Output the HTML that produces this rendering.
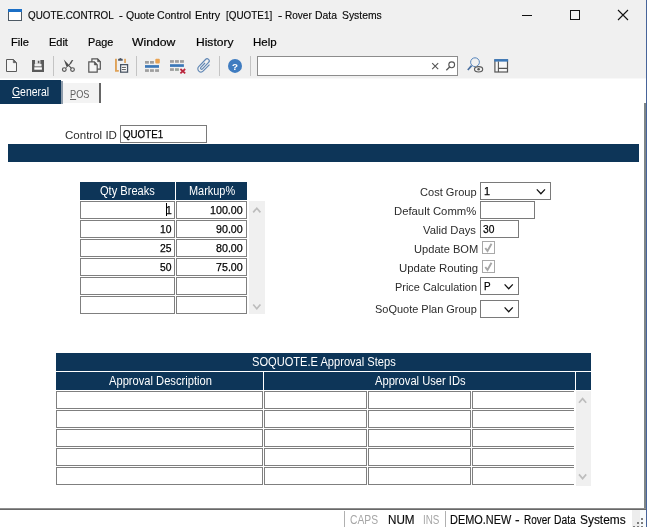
<!DOCTYPE html>
<html><head><meta charset="utf-8">
<style>
*{box-sizing:border-box;margin:0;padding:0}
html,body{width:647px;height:527px;overflow:hidden;background:#fff;font-family:"Liberation Sans",sans-serif;}
body{position:relative}
.abs{position:absolute}
.t{position:absolute;white-space:nowrap;line-height:1;transform-origin:0 0;display:block}
.cell{position:absolute;border:1px solid #7f7f7f;background:#fff;height:18px}
.hdr{position:absolute;background:#0d3558;height:18px}
.inp{position:absolute;border:1px solid #7a7a7a;background:#fff;height:18px}
.sep{position:absolute;top:56px;width:1px;height:20px;background:#c4c4c4}
svg{position:absolute;left:0;top:0;overflow:visible}
</style></head><body>
<div class="abs" style="left:0;top:0;width:647px;height:78px;background:#f0f0f0"></div>
<div class="abs" style="left:0;top:78px;width:647px;height:1px;background:#f8f8f8"></div>
<!-- search box -->
<div class="abs" style="left:257px;top:56px;width:201px;height:20px;background:#fff;border:1px solid #8c8c8c"></div>
<div class="sep" style="left:53px"></div><div class="sep" style="left:136px"></div><div class="sep" style="left:219px"></div><div class="sep" style="left:250px"></div>
<!-- tabs -->
<div class="abs" style="left:0;top:80px;width:61px;height:24px;background:#0d3558"></div>
<div class="abs" style="left:61px;top:81px;width:2px;height:23px;background:#8e9cab"></div>
<div class="abs" style="left:63px;top:83px;width:36px;height:19.5px;background:#f3f3f3"></div>
<div class="abs" style="left:99px;top:83px;width:2px;height:19.5px;background:#666"></div>
<!-- right edge -->
<div class="abs" style="left:644px;top:103px;width:2px;height:407px;background:#7e8688"></div>
<div class="abs" style="left:646px;top:0;width:1px;height:527px;background:#47649a"></div>
<!-- control id -->
<div class="inp" style="left:120px;top:125px;width:87px"></div>
<div class="abs" style="left:8px;top:144px;width:631px;height:18px;background:#0d3558"></div>
<!-- qty grid -->
<div class="hdr" style="left:80px;top:182px;width:95px"></div>
<div class="hdr" style="left:176px;top:182px;width:71px"></div>
<div class="abs" style="left:249px;top:201px;width:16px;height:113px;background:#f0f0f0"></div>
<!-- right form -->
<div class="inp" style="left:480px;top:182px;width:71px"></div>
<div class="inp" style="left:480px;top:201px;width:55px"></div>
<div class="inp" style="left:480px;top:220px;width:39px"></div>
<div class="inp" style="left:480px;top:277px;width:39px"></div>
<div class="inp" style="left:480px;top:300px;width:39px"></div>
<div class="abs" style="left:482px;top:241px;width:13px;height:13px;border:1px solid #a8a8a8;background:#fff"></div>
<div class="abs" style="left:482px;top:260px;width:13px;height:13px;border:1px solid #a8a8a8;background:#fff"></div>
<!-- approval grid -->
<div class="hdr" style="left:56px;top:353px;width:535px"></div>
<div class="hdr" style="left:56px;top:372px;width:207px"></div>
<div class="hdr" style="left:264px;top:372px;width:311px"></div>
<div class="hdr" style="left:576px;top:372px;width:15px"></div>
<div class="abs" style="left:576px;top:391px;width:15px;height:95px;background:#f0f0f0"></div>
<div class="cell" style="left:80px;top:201px;width:95px;"></div>
<div class="cell" style="left:176px;top:201px;width:71px;"></div>
<div class="cell" style="left:80px;top:220px;width:95px;"></div>
<div class="cell" style="left:176px;top:220px;width:71px;"></div>
<div class="cell" style="left:80px;top:239px;width:95px;"></div>
<div class="cell" style="left:176px;top:239px;width:71px;"></div>
<div class="cell" style="left:80px;top:258px;width:95px;"></div>
<div class="cell" style="left:176px;top:258px;width:71px;"></div>
<div class="cell" style="left:80px;top:277px;width:95px;"></div>
<div class="cell" style="left:176px;top:277px;width:71px;"></div>
<div class="cell" style="left:80px;top:296px;width:95px;"></div>
<div class="cell" style="left:176px;top:296px;width:71px;"></div>
<div class="cell" style="left:56px;top:391px;width:207px;"></div>
<div class="cell" style="left:264px;top:391px;width:103px;"></div>
<div class="cell" style="left:368px;top:391px;width:103px;"></div>
<div class="cell" style="left:472px;top:391px;width:102px;border-right:none;"></div>
<div class="cell" style="left:56px;top:410px;width:207px;"></div>
<div class="cell" style="left:264px;top:410px;width:103px;"></div>
<div class="cell" style="left:368px;top:410px;width:103px;"></div>
<div class="cell" style="left:472px;top:410px;width:102px;border-right:none;"></div>
<div class="cell" style="left:56px;top:429px;width:207px;"></div>
<div class="cell" style="left:264px;top:429px;width:103px;"></div>
<div class="cell" style="left:368px;top:429px;width:103px;"></div>
<div class="cell" style="left:472px;top:429px;width:102px;border-right:none;"></div>
<div class="cell" style="left:56px;top:448px;width:207px;"></div>
<div class="cell" style="left:264px;top:448px;width:103px;"></div>
<div class="cell" style="left:368px;top:448px;width:103px;"></div>
<div class="cell" style="left:472px;top:448px;width:102px;border-right:none;"></div>
<div class="cell" style="left:56px;top:467px;width:207px;"></div>
<div class="cell" style="left:264px;top:467px;width:103px;"></div>
<div class="cell" style="left:368px;top:467px;width:103px;"></div>
<div class="cell" style="left:472px;top:467px;width:102px;border-right:none;"></div>
<div class="abs" style="left:166px;top:203px;width:1.2px;height:13px;background:#000"></div>
<!-- status bar -->
<div class="abs" style="left:0;top:508px;width:646px;height:1px;background:#8e8e8e"></div><div class="abs" style="left:0;top:509px;width:646px;height:1px;background:#686868"></div>
<div class="abs" style="left:632px;top:510px;width:8px;height:17px;background:#ededed"></div><div class="abs" style="left:640px;top:510px;width:6px;height:17px;background:#f6fafc"></div>
<div class="abs" style="left:344px;top:511px;width:1px;height:16px;background:#b0b0b0"></div>
<div class="abs" style="left:445px;top:511px;width:1px;height:16px;background:#b0b0b0"></div>
<div class="abs" style="left:0;top:0;width:647px;height:527px;will-change:transform">
<span class="t" style="left:27.80px;top:9.72px;font-size:11.2px;color:#0a0a0a;transform:scaleX(0.8783);-webkit-text-stroke:0.15px #000;">QUOTE.CONTROL</span>
<span class="t" style="left:119.20px;top:9.72px;font-size:11.2px;color:#0a0a0a;transform:scaleX(1.0218);-webkit-text-stroke:0.15px #000;">-</span>
<span class="t" style="left:125.50px;top:9.72px;font-size:11.2px;color:#0a0a0a;transform:scaleX(0.9346);-webkit-text-stroke:0.15px #000;">Quote</span>
<span class="t" style="left:157.40px;top:9.72px;font-size:11.2px;color:#0a0a0a;transform:scaleX(0.9475);-webkit-text-stroke:0.15px #000;">Control</span>
<span class="t" style="left:195.30px;top:9.72px;font-size:11.2px;color:#0a0a0a;transform:scaleX(0.9632);-webkit-text-stroke:0.15px #000;">Entry</span>
<span class="t" style="left:226.10px;top:9.72px;font-size:11.2px;color:#0a0a0a;transform:scaleX(0.8837);-webkit-text-stroke:0.15px #000;">[QUOTE1]</span>
<span class="t" style="left:277.60px;top:9.72px;font-size:11.2px;color:#0a0a0a;transform:scaleX(1.1294);-webkit-text-stroke:0.15px #000;">-</span>
<span class="t" style="left:284.50px;top:9.72px;font-size:11.2px;color:#0a0a0a;transform:scaleX(0.8969);-webkit-text-stroke:0.15px #000;">Rover</span>
<span class="t" style="left:315.40px;top:9.72px;font-size:11.2px;color:#0a0a0a;transform:scaleX(0.9295);-webkit-text-stroke:0.15px #000;">Data</span>
<span class="t" style="left:341.60px;top:9.72px;font-size:11.2px;color:#0a0a0a;transform:scaleX(0.9264);-webkit-text-stroke:0.15px #000;">Systems</span>
<span class="t" style="left:11.40px;top:36.08px;font-size:11.6px;color:#000;transform:scaleX(0.9618);-webkit-text-stroke:0.2px #000;">File</span>
<span class="t" style="left:48.50px;top:36.08px;font-size:11.6px;color:#000;transform:scaleX(0.9458);-webkit-text-stroke:0.2px #000;">Edit</span>
<span class="t" style="left:87.50px;top:36.08px;font-size:11.6px;color:#000;transform:scaleX(0.9337);-webkit-text-stroke:0.2px #000;">Page</span>
<span class="t" style="left:132.40px;top:36.08px;font-size:11.6px;color:#000;transform:scaleX(1.0526);-webkit-text-stroke:0.2px #000;">Window</span>
<span class="t" style="left:195.70px;top:36.08px;font-size:11.6px;color:#000;transform:scaleX(1.0384);-webkit-text-stroke:0.2px #000;">History</span>
<span class="t" style="left:252.70px;top:36.08px;font-size:11.6px;color:#000;transform:scaleX(0.9925);-webkit-text-stroke:0.2px #000;">Help</span>
<span class="t" style="left:11.50px;top:86.24px;font-size:12px;color:#fff;transform:scaleX(0.8688);"><u>G</u>eneral</span>
<span class="t" style="left:69.80px;top:89.29px;font-size:11px;color:#606060;transform:scaleX(0.8345);"><u>P</u>OS</span>
<span class="t" style="left:64.60px;top:129.69px;font-size:11px;color:#2c2c2c;transform:scaleX(1.0485);">Control ID</span>
<span class="t" style="left:419.70px;top:186.69px;font-size:11px;color:#2c2c2c;transform:scaleX(1.0063);">Cost Group</span>
<span class="t" style="left:394.00px;top:205.69px;font-size:11px;color:#2c2c2c;transform:scaleX(1.0275);">Default Comm%</span>
<span class="t" style="left:423.40px;top:224.69px;font-size:11px;color:#2c2c2c;transform:scaleX(1.0217);">Valid Days</span>
<span class="t" style="left:413.50px;top:243.69px;font-size:11px;color:#2c2c2c;transform:scaleX(1.0111);">Update BOM</span>
<span class="t" style="left:398.60px;top:262.69px;font-size:11px;color:#2c2c2c;transform:scaleX(1.0361);">Update Routing</span>
<span class="t" style="left:394.50px;top:281.69px;font-size:11px;color:#2c2c2c;transform:scaleX(0.9934);">Price Calculation</span>
<span class="t" style="left:374.50px;top:303.69px;font-size:11px;color:#2c2c2c;transform:scaleX(0.9967);">SoQuote Plan Group</span>
<span class="t" style="left:122.60px;top:129.27px;font-size:11.5px;color:#000;transform:scaleX(0.8477);-webkit-text-stroke:0.25px #000;">QUOTE1</span>
<span class="t" style="left:483.90px;top:186.27px;font-size:11.5px;color:#000;transform:scaleX(0.9500);-webkit-text-stroke:0.25px #000;">1</span>
<span class="t" style="left:482.90px;top:224.27px;font-size:11.5px;color:#000;transform:scaleX(0.8904);-webkit-text-stroke:0.25px #000;">30</span>
<span class="t" style="left:483.60px;top:281.27px;font-size:11.5px;color:#000;transform:scaleX(0.8600);-webkit-text-stroke:0.25px #000;">P</span>
<span class="t" style="left:165.66px;top:205.27px;font-size:11.5px;color:#000;transform:scaleX(0.9000);-webkit-text-stroke:0.25px #000;">1</span>
<span class="t" style="left:210.49px;top:205.27px;font-size:11.5px;color:#000;transform:scaleX(0.9300);-webkit-text-stroke:0.25px #000;">100.00</span>
<span class="t" style="left:159.88px;top:224.27px;font-size:11.5px;color:#000;transform:scaleX(0.9000);-webkit-text-stroke:0.25px #000;">10</span>
<span class="t" style="left:216.42px;top:224.27px;font-size:11.5px;color:#000;transform:scaleX(0.9300);-webkit-text-stroke:0.25px #000;">90.00</span>
<span class="t" style="left:159.88px;top:243.27px;font-size:11.5px;color:#000;transform:scaleX(0.9000);-webkit-text-stroke:0.25px #000;">25</span>
<span class="t" style="left:216.42px;top:243.27px;font-size:11.5px;color:#000;transform:scaleX(0.9300);-webkit-text-stroke:0.25px #000;">80.00</span>
<span class="t" style="left:159.88px;top:262.27px;font-size:11.5px;color:#000;transform:scaleX(0.9000);-webkit-text-stroke:0.25px #000;">50</span>
<span class="t" style="left:216.42px;top:262.27px;font-size:11.5px;color:#000;transform:scaleX(0.9300);-webkit-text-stroke:0.25px #000;">75.00</span>
<span class="t" style="left:100.20px;top:184.84px;font-size:12px;color:#fff;transform:scaleX(0.9234);">Qty Breaks</span>
<span class="t" style="left:188.80px;top:184.84px;font-size:12px;color:#fff;transform:scaleX(0.9098);">Markup%</span>
<span class="t" style="left:252.00px;top:356.04px;font-size:12px;color:#fff;transform:scaleX(0.9248);">SOQUOTE.E Approval Steps</span>
<span class="t" style="left:108.60px;top:375.04px;font-size:12px;color:#fff;transform:scaleX(0.9294);">Approval Description</span>
<span class="t" style="left:375.00px;top:375.04px;font-size:12px;color:#fff;transform:scaleX(0.9306);">Approval User IDs</span>
<span class="t" style="left:349.60px;top:513.84px;font-size:12px;color:#a6a6a6;transform:scaleX(0.8570);">CAPS</span>
<span class="t" style="left:387.70px;top:513.84px;font-size:12px;color:#0a0a0a;transform:scaleX(0.9734);-webkit-text-stroke:0.15px #000;">NUM</span>
<span class="t" style="left:423.10px;top:513.84px;font-size:12px;color:#a6a6a6;transform:scaleX(0.8194);">INS</span>
<span class="t" style="left:449.80px;top:513.84px;font-size:12px;color:#0a0a0a;transform:scaleX(0.9092);-webkit-text-stroke:0.15px #000;">DEMO.NEW</span>
<span class="t" style="left:515.20px;top:513.84px;font-size:12px;color:#0a0a0a;transform:scaleX(1.1545);-webkit-text-stroke:0.15px #000;">-</span>
<span class="t" style="left:523.80px;top:513.84px;font-size:12px;color:#0a0a0a;transform:scaleX(0.8308);-webkit-text-stroke:0.15px #000;">Rover</span>
<span class="t" style="left:554.20px;top:513.84px;font-size:12px;color:#0a0a0a;transform:scaleX(0.8596);-webkit-text-stroke:0.15px #000;">Data</span>
<span class="t" style="left:579.80px;top:513.84px;font-size:12px;color:#0a0a0a;transform:scaleX(0.9928);-webkit-text-stroke:0.15px #000;">Systems</span>
</div>
<svg width="647" height="527" viewBox="0 0 647 527">
<!-- title icon -->
<rect x="8.500" y="9.500" width="13" height="11" fill="#fff" stroke="#4d5964"/>
<rect x="8" y="9" width="14" height="3" fill="#1b6fc6"/>
<!-- window controls -->
<path d="M522 15.500h10" stroke="#111" stroke-width="1" fill="none"/>
<rect x="570.500" y="10.500" width="9" height="9" stroke="#111" fill="none"/>
<path d="M618 10l10 10M628 10l-10 10" stroke="#111" stroke-width="1.100" fill="none"/>
<!-- dropdown chevrons -->
<path d="M536.8 189.4L540.9 193.8L545.0 189.4" fill="none" stroke="#111" stroke-width="1.25"/>
<path d="M504.6 284.4L508.70000000000005 288.79999999999995L512.8000000000001 284.4" fill="none" stroke="#111" stroke-width="1.25"/>
<path d="M504.6 307.4L508.70000000000005 311.79999999999995L512.8000000000001 307.4" fill="none" stroke="#111" stroke-width="1.25"/>
<!-- scroll arrows -->
<path d="M253.2 212.39999999999998L256.8 208.2L260.4 212.39999999999998" fill="none" stroke="#bdbdbd" stroke-width="1.7"/>
<path d="M253.2 304.5L256.8 308.7L260.4 304.5" fill="none" stroke="#bdbdbd" stroke-width="1.7"/>
<path d="M579 402.8L582.6 398.6L586.2 402.8" fill="none" stroke="#bdbdbd" stroke-width="1.7"/>
<path d="M579 474.4L582.6 478.59999999999997L586.2 474.4" fill="none" stroke="#bdbdbd" stroke-width="1.7"/>
<!-- checks -->
<path d="M485.300 248l2.200 3 4-7.200" stroke="#a6a6a6" stroke-width="1.900" fill="none"/>
<path d="M485.300 267l2.200 3 4-7.200" stroke="#a6a6a6" stroke-width="1.900" fill="none"/>
<!-- new doc -->
<path d="M6.500 59.500h6.800l3.200 3.200v8.800h-10z" fill="#f5f5f5" stroke="#5a5a5a" stroke-width="1"/>
<path d="M13.300 59.500v3.200h3.200z" fill="#5a5a5a" stroke="#5a5a5a" stroke-width="0.600"/>
<!-- save -->
<rect x="32" y="60" width="12" height="12" fill="#5a5a5a"/>
<rect x="35" y="60" width="5.400" height="3.900" fill="#e6e6e6"/>
<rect x="37.800" y="60.800" width="1.600" height="2.500" fill="#5a5a5a"/>
<rect x="34.500" y="63.900" width="7" height="2.500" fill="#f0f0f0"/>
<rect x="34.300" y="67.300" width="7.600" height="2.400" fill="#fff"/>
<!-- scissors -->
<path d="M73.300 59.900l-1.500 0.200-2.400 3.500 1.300 1z" fill="#555"/>
<path d="M70 64l-4.300 3.900" stroke="#555" stroke-width="1" fill="none"/>
<path d="M63.800 59.500L71.900 67.900L70.900 68.500L68.800 66.300L66.400 66.500Z" fill="#4c4c4c"/>
<circle cx="64.300" cy="69.600" r="1.850" fill="none" stroke="#555" stroke-width="1.200"/>
<circle cx="72.500" cy="69.600" r="1.850" fill="none" stroke="#555" stroke-width="1.200"/>
<!-- copy -->
<path d="M91.900 58.800h5.700l2.700 2.900v7.400h-8.400z" fill="#f4f4f4" stroke="#555" stroke-width="1.200"/>
<path d="M97.600 58.800v2.900h2.700z" fill="#555" stroke="#555" stroke-width="0.600"/>
<path d="M88.800 61.900h5.600l2.800 3v7.300h-8.400z" fill="#f4f4f4" stroke="#555" stroke-width="1.200"/>
<path d="M94.400 61.900v3h2.800z" fill="#555" stroke="#555" stroke-width="0.600"/>
<!-- paste -->
<path d="M115 58.800h1.900v11.200h1.900v1.700h-3.800z" fill="#dfa258"/>
<rect x="124.200" y="58.800" width="1.700" height="4.200" fill="#dfa258"/>
<path d="M118.100 60.700v-1.500q0-0.500 0.500-0.500h0.700q0.300-0.800 1.100-0.800t1.100 0.800h0.700q0.500 0 0.500 0.500v1.500z" fill="#4d5563"/>
<rect x="120.650" y="64.650" width="6.900" height="7.500" fill="#fff" stroke="#4a5563" stroke-width="1.300"/>
<path d="M121.900 67.400h4M121.900 69.600h4" stroke="#555" stroke-width="1"/>
<!-- insert row -->
<rect x="145" y="61" width="3.900" height="2.700" fill="#9e9e9e"/><rect x="150" y="61" width="3.900" height="2.700" fill="#9e9e9e"/>
<rect x="155.300" y="58.700" width="4.500" height="4.900" rx="1" fill="#e9a352"/>
<rect x="145" y="65.100" width="14" height="2.700" fill="#3b78b8"/>
<rect x="145" y="69.200" width="3.900" height="2.700" fill="#9e9e9e"/><rect x="150" y="69.200" width="3.900" height="2.700" fill="#9e9e9e"/><rect x="155.100" y="69.200" width="3.900" height="2.700" fill="#9e9e9e"/>
<!-- delete row -->
<rect x="170" y="60.100" width="3.900" height="2.700" fill="#9e9e9e"/><rect x="175" y="60.100" width="3.900" height="2.700" fill="#9e9e9e"/><rect x="180" y="60.100" width="3.900" height="2.700" fill="#9e9e9e"/>
<rect x="170" y="64.200" width="13.900" height="2.700" fill="#3b78b8"/>
<rect x="170" y="68.200" width="3.900" height="2.700" fill="#9e9e9e"/><rect x="175" y="68.200" width="3.900" height="2.700" fill="#9aa39c"/>
<path d="M180.400 69l4.800 4.400M185.200 69l-4.800 4.400" stroke="#b9243b" stroke-width="1.700"/>
<!-- paperclip -->
<g transform="translate(204.2 65.3) rotate(-46)">
<path d="M4.200 3.300H-4.700A3.200 3.200 0 0 1 -4.700 -3.100H5.100A2.150 2.150 0 0 1 5.100 1.200H-3.800A1.100 1.100 0 0 1 -3.800 -1H2.200" fill="none" stroke="#5f86b4" stroke-width="1.150"/>
</g>
<!-- help -->
<circle cx="235" cy="65.900" r="7" fill="#3f7cc0"/>
<text x="235" y="69.500" font-family="Liberation Sans" font-weight="bold" font-size="9.800" fill="#fff" text-anchor="middle">?</text>
<!-- search box X and magnifier -->
<path d="M432.200 63.200l6 6M438.200 63.200l-6 6" stroke="#555" stroke-width="1.100"/>
<circle cx="451.700" cy="64.800" r="2.900" fill="none" stroke="#555" stroke-width="1.100"/>
<path d="M449.600 67l-3.300 3.200" stroke="#555" stroke-width="1.300"/>
<!-- search eye -->
<circle cx="475" cy="62.200" r="4.400" fill="none" stroke="#5584bc" stroke-width="1"/>
<path d="M471.600 65.600l-3.800 4.400" stroke="#4a6f9f" stroke-width="1.700"/>
<ellipse cx="478.600" cy="69.300" rx="4.700" ry="3.300" fill="#f0f0f0"/>
<ellipse cx="478.600" cy="69.300" rx="4.100" ry="2.700" fill="#f0f0f0" stroke="#5a5a5a" stroke-width="1.100"/>
<circle cx="478.600" cy="69.300" r="1.300" fill="#5a5a5a"/>
<!-- layout -->
<rect x="494.900" y="60" width="12.600" height="12" fill="#f8f8f8" stroke="#555" stroke-width="1.200"/>
<rect x="494.300" y="59.100" width="13.800" height="2.500" fill="#3c78b8"/>
<path d="M498.400 61.500v10.500M498.400 68.400h9" stroke="#555" stroke-width="1.100" fill="none"/>
<!-- size grip -->
<g fill="#7c7c7c"><rect x="641" y="518" width="2" height="2"/><rect x="637" y="522" width="2" height="2"/><rect x="641" y="522" width="2" height="2"/><rect x="633" y="526" width="2" height="1"/><rect x="637" y="526" width="2" height="1"/><rect x="641" y="526" width="2" height="1"/></g>

</svg>
</body></html>
